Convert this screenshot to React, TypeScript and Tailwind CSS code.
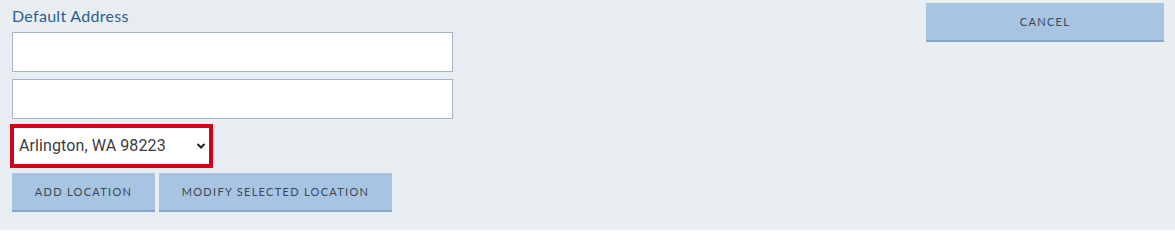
import React from "react";

export default function App() {
  return (
    <div className="w-[1175px] h-[230px] bg-[#e8edf2] flex justify-between pl-3 pr-[11px] overflow-hidden" style={{ fontFamily: "Lato, 'Open Sans', sans-serif" }}>
      <div className="w-[441px] flex flex-col pt-[6px]">
        <label className="text-[16px] leading-[20px] text-[#2d5f8d] tracking-[0.3px]">Default Address</label>
        <input className="mt-[6px] h-[40px] w-full bg-white border border-[#a5b4c6] outline-none" />
        <input className="mt-[7px] h-[40px] w-full bg-white border border-[#a5b4c6] outline-none" />
        <div className="mt-[5px] -ml-[2px] w-[203px] h-[44px] border-[4px] border-[#d0021b] bg-white flex items-center justify-between pl-[5px] pr-[2px]">
          <span className="text-[16px] text-[#3c3c3c] tracking-[0.1px]" style={{ fontFamily: "Roboto, 'Liberation Sans', sans-serif" }}>Arlington, WA 98223</span>
          <svg width="10" height="8" viewBox="0 0 10 8" className="mr-[1px]">
            <path d="M1.5 2 L5 5.5 L8.5 2" fill="none" stroke="#222" strokeWidth="2" />
          </svg>
        </div>
        <div className="mt-[5px] flex gap-[4px]">
          <button className="w-[143px] h-[39px] pt-[1px] bg-[#a7c5e2] border-b-[2px] border-[#8aa6c4] text-[11px] tracking-[1.3px] text-[#3d4656]">ADD LOCATION</button>
          <button className="w-[233px] h-[39px] pt-[1px] bg-[#a7c5e2] border-b-[2px] border-[#8aa6c4] text-[11px] tracking-[1.3px] text-[#3d4656]">MODIFY SELECTED LOCATION</button>
        </div>
      </div>
      <div className="pt-[3px]">
        <button className="w-[238px] h-[39px] pt-[2px] bg-[#a7c5e2] border-b-[2px] border-[#8aa6c4] text-[11px] tracking-[1.3px] text-[#3d4656]">CANCEL</button>
      </div>
    </div>
  );
}
